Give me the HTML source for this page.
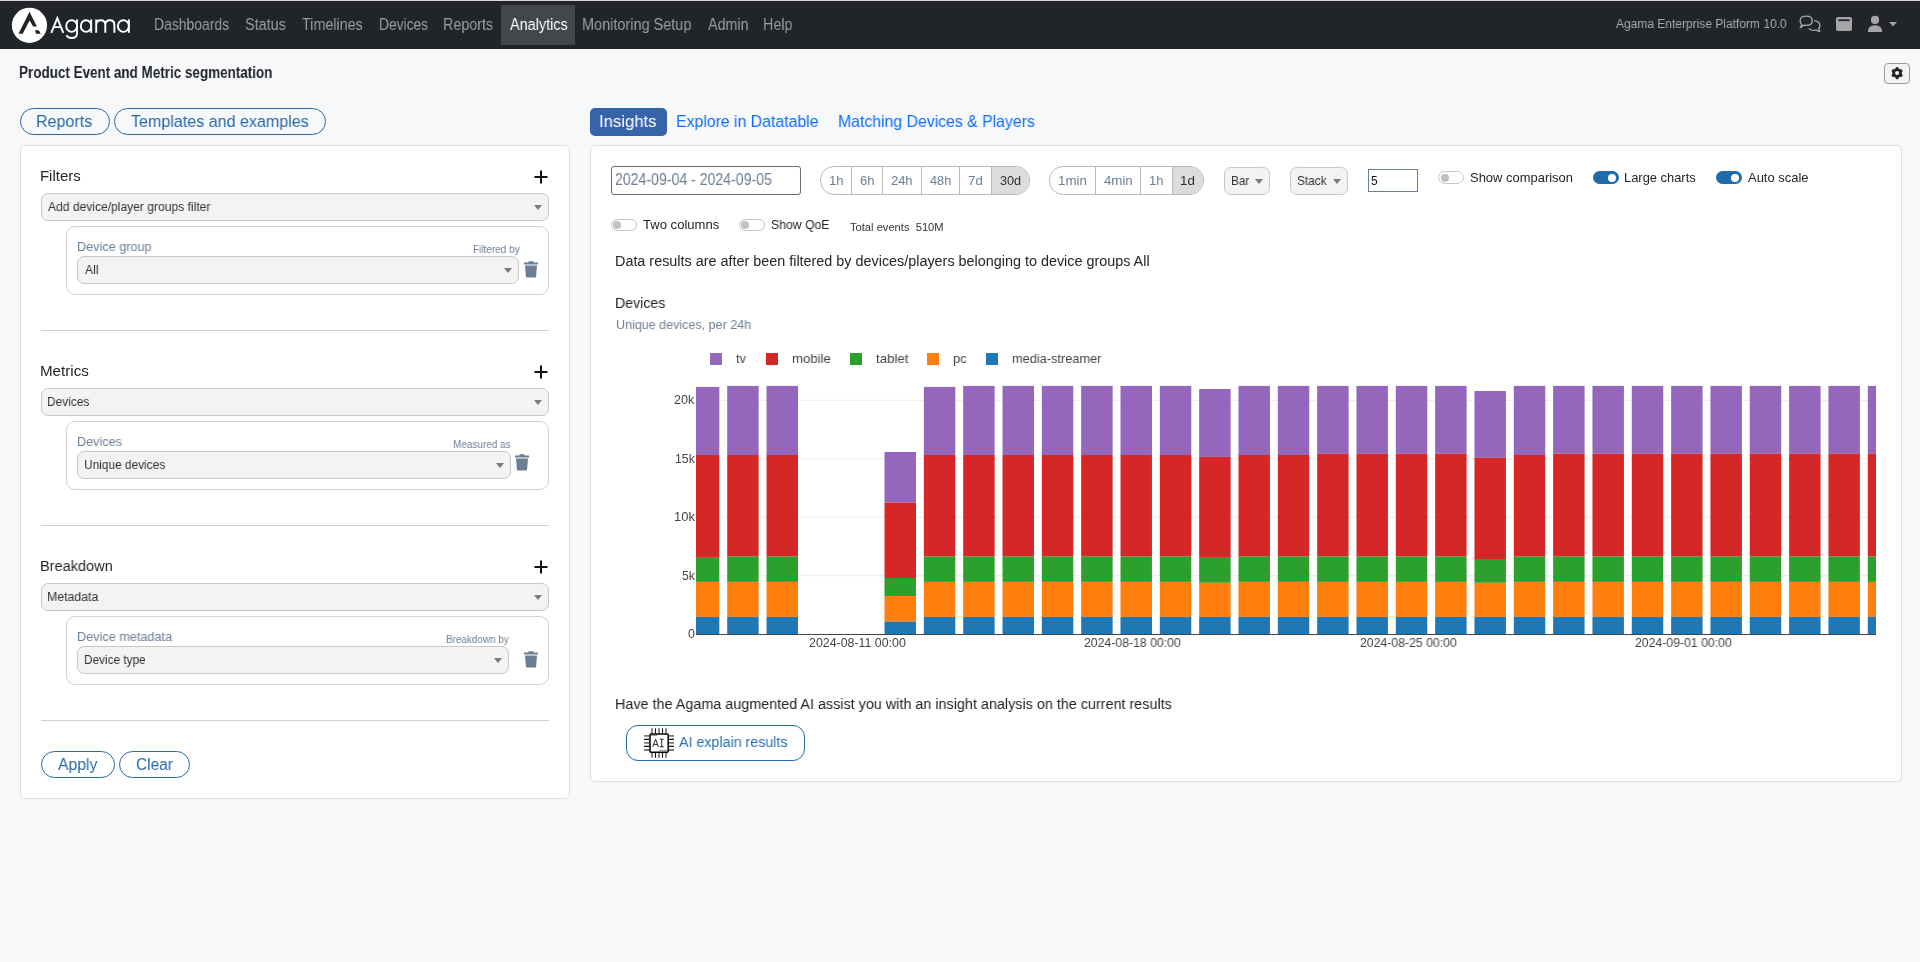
<!DOCTYPE html>
<html><head><meta charset="utf-8"><title>Agama Analytics</title>
<style>
html,body{margin:0;padding:0;width:1920px;height:962px;overflow:hidden;background:#f7f8fa;font-family:"Liberation Sans",sans-serif;position:relative}
</style></head><body>
<div style="position:absolute;left:0px;top:0px;width:1920px;height:1px;background:#dcd4cf"></div>
<div style="position:absolute;left:0px;top:1px;width:1920px;height:48px;background:#212529"></div>
<div style="position:absolute;left:501px;top:5px;width:74px;height:40px;background:#43474b"></div>
<div style="position:absolute;left:20px;top:108px;width:90px;height:27px;box-sizing:border-box;border:1px solid #2468a8;border-radius:14px"></div>
<div style="position:absolute;left:114px;top:108px;width:212px;height:27px;box-sizing:border-box;border:1px solid #2468a8;border-radius:14px"></div>
<div style="position:absolute;left:590px;top:108px;width:77px;height:28px;background:#3763a9;border-radius:5px"></div>
<div style="position:absolute;left:20px;top:145px;width:550px;height:654px;box-sizing:border-box;background:#fff;border:1px solid #dcdee0;border-radius:5px"></div>
<div style="position:absolute;left:590px;top:145px;width:1312px;height:637px;box-sizing:border-box;background:#fff;border:1px solid #dcdee0;border-radius:5px"></div>
<svg style="position:absolute;left:534px;top:169.5px" width="14" height="14" viewBox="0 0 14 14"><path d="M7 0.5V13.5M0.5 7H13.5" stroke="#111" stroke-width="2"/></svg>
<div style="position:absolute;left:41px;top:193px;width:508px;height:28px;box-sizing:border-box;background:#f3f3f3;border:1px solid #c8c8c8;border-radius:7px"></div>
<svg style="position:absolute;left:534px;top:205px" width="8" height="5" viewBox="0 0 8 5"><path d="M0 0H8L4.0 5Z" fill="#7a7a7a"/></svg>
<div style="position:absolute;left:66px;top:226px;width:483px;height:69px;box-sizing:border-box;border:1px solid #d2d2d2;border-radius:9px"></div>
<div style="position:absolute;left:77px;top:256px;width:442px;height:28px;box-sizing:border-box;background:#f3f3f3;border:1px solid #c8c8c8;border-radius:7px"></div>
<svg style="position:absolute;left:504px;top:268px" width="8" height="5" viewBox="0 0 8 5"><path d="M0 0H8L4.0 5Z" fill="#7a7a7a"/></svg>
<svg style="position:absolute;left:524px;top:261px" width="14" height="17" viewBox="0 0 14 17"><path d="M0 1.6H14V3.4H0Z M4.8 0.2H9.2L9.8 1.6H4.2Z M1 4.6H13L12.1 15.6Q12 16.6 11 16.6H3Q2 16.6 1.9 15.6Z" fill="#6c7e92"/></svg>
<div style="position:absolute;left:41px;top:330px;width:508px;height:1px;background:#c9d0d8"></div>
<svg style="position:absolute;left:534px;top:364.5px" width="14" height="14" viewBox="0 0 14 14"><path d="M7 0.5V13.5M0.5 7H13.5" stroke="#111" stroke-width="2"/></svg>
<div style="position:absolute;left:41px;top:388px;width:508px;height:28px;box-sizing:border-box;background:#f3f3f3;border:1px solid #c8c8c8;border-radius:7px"></div>
<svg style="position:absolute;left:534px;top:400px" width="8" height="5" viewBox="0 0 8 5"><path d="M0 0H8L4.0 5Z" fill="#7a7a7a"/></svg>
<div style="position:absolute;left:66px;top:421px;width:483px;height:69px;box-sizing:border-box;border:1px solid #d2d2d2;border-radius:9px"></div>
<div style="position:absolute;left:77px;top:451px;width:434px;height:28px;box-sizing:border-box;background:#f3f3f3;border:1px solid #c8c8c8;border-radius:7px"></div>
<svg style="position:absolute;left:496px;top:463px" width="8" height="5" viewBox="0 0 8 5"><path d="M0 0H8L4.0 5Z" fill="#7a7a7a"/></svg>
<svg style="position:absolute;left:515.4px;top:454.2px" width="14" height="17" viewBox="0 0 14 17"><path d="M0 1.6H14V3.4H0Z M4.8 0.2H9.2L9.8 1.6H4.2Z M1 4.6H13L12.1 15.6Q12 16.6 11 16.6H3Q2 16.6 1.9 15.6Z" fill="#6c7e92"/></svg>
<div style="position:absolute;left:41px;top:525px;width:508px;height:1px;background:#c9d0d8"></div>
<svg style="position:absolute;left:534px;top:559.5px" width="14" height="14" viewBox="0 0 14 14"><path d="M7 0.5V13.5M0.5 7H13.5" stroke="#111" stroke-width="2"/></svg>
<div style="position:absolute;left:41px;top:583px;width:508px;height:28px;box-sizing:border-box;background:#f3f3f3;border:1px solid #c8c8c8;border-radius:7px"></div>
<svg style="position:absolute;left:534px;top:595px" width="8" height="5" viewBox="0 0 8 5"><path d="M0 0H8L4.0 5Z" fill="#7a7a7a"/></svg>
<div style="position:absolute;left:66px;top:616px;width:483px;height:69px;box-sizing:border-box;border:1px solid #d2d2d2;border-radius:9px"></div>
<div style="position:absolute;left:77px;top:646px;width:432px;height:28px;box-sizing:border-box;background:#f3f3f3;border:1px solid #c8c8c8;border-radius:7px"></div>
<svg style="position:absolute;left:494px;top:658px" width="8" height="5" viewBox="0 0 8 5"><path d="M0 0H8L4.0 5Z" fill="#7a7a7a"/></svg>
<svg style="position:absolute;left:524px;top:651px" width="14" height="17" viewBox="0 0 14 17"><path d="M0 1.6H14V3.4H0Z M4.8 0.2H9.2L9.8 1.6H4.2Z M1 4.6H13L12.1 15.6Q12 16.6 11 16.6H3Q2 16.6 1.9 15.6Z" fill="#6c7e92"/></svg>
<div style="position:absolute;left:41px;top:720px;width:508px;height:1px;background:#c9d0d8"></div>
<div style="position:absolute;left:41px;top:751px;width:74px;height:27px;box-sizing:border-box;border:1px solid #2468a8;border-radius:14px"></div>
<div style="position:absolute;left:119px;top:751px;width:71px;height:27px;box-sizing:border-box;border:1px solid #2468a8;border-radius:14px"></div>
<div style="position:absolute;left:611px;top:166px;width:190px;height:29px;box-sizing:border-box;border:1px solid #6b6b6b;border-radius:3px"></div>
<div style="position:absolute;left:820px;top:166px;width:210px;height:29px;box-sizing:border-box;border:1px solid #b8b8b8;border-radius:14px;overflow:hidden;background:#fff"><div style="position:absolute;left:170.39999999999998px;top:0;right:0;bottom:0;background:#dcdcdc"></div><div style="position:absolute;left:30.100000000000023px;top:0;width:1px;bottom:0;background:#b8b8b8"></div><div style="position:absolute;left:61.0px;top:0;width:1px;bottom:0;background:#b8b8b8"></div><div style="position:absolute;left:99.89999999999998px;top:0;width:1px;bottom:0;background:#b8b8b8"></div><div style="position:absolute;left:137.79999999999995px;top:0;width:1px;bottom:0;background:#b8b8b8"></div><div style="position:absolute;left:169.89999999999998px;top:0;width:1px;bottom:0;background:#b8b8b8"></div></div>
<div style="position:absolute;left:1049px;top:166px;width:155px;height:29px;box-sizing:border-box;border:1px solid #b8b8b8;border-radius:14px;overflow:hidden;background:#fff"><div style="position:absolute;left:122.5px;top:0;right:0;bottom:0;background:#dcdcdc"></div><div style="position:absolute;left:44.90000000000009px;top:0;width:1px;bottom:0;background:#b8b8b8"></div><div style="position:absolute;left:90.0px;top:0;width:1px;bottom:0;background:#b8b8b8"></div><div style="position:absolute;left:122.0px;top:0;width:1px;bottom:0;background:#b8b8b8"></div></div>
<div style="position:absolute;left:1224px;top:167px;width:46px;height:28px;box-sizing:border-box;background:#f3f3f3;border:1px solid #c8c8c8;border-radius:7px"></div>
<svg style="position:absolute;left:1255px;top:179px" width="8" height="5" viewBox="0 0 8 5"><path d="M0 0H8L4.0 5Z" fill="#7a7a7a"/></svg>
<div style="position:absolute;left:1290px;top:167px;width:58px;height:28px;box-sizing:border-box;background:#f3f3f3;border:1px solid #c8c8c8;border-radius:7px"></div>
<svg style="position:absolute;left:1333px;top:179px" width="8" height="5" viewBox="0 0 8 5"><path d="M0 0H8L4.0 5Z" fill="#7a7a7a"/></svg>
<div style="position:absolute;left:1368px;top:169px;width:50px;height:23px;box-sizing:border-box;border:1px solid #6a7f95"></div>
<div style="position:absolute;left:1438px;top:171px;width:26px;height:13px;box-sizing:border-box;border-radius:7px;border:1px solid #c6c6c6;background:#fff"></div><div style="position:absolute;left:1440.5px;top:173.5px;width:8px;height:8px;border-radius:50%;background:#c0c0c0"></div>
<div style="position:absolute;left:1593px;top:171px;width:26px;height:13px;border-radius:7px;background:#1f6ca9"></div><div style="position:absolute;left:1608px;top:173.5px;width:8px;height:8px;border-radius:50%;background:#fff"></div>
<div style="position:absolute;left:1716px;top:171px;width:26px;height:13px;border-radius:7px;background:#1f6ca9"></div><div style="position:absolute;left:1731px;top:173.5px;width:8px;height:8px;border-radius:50%;background:#fff"></div>
<div style="position:absolute;left:611px;top:219px;width:26px;height:12px;box-sizing:border-box;border-radius:7px;border:1px solid #c6c6c6;background:#fff"></div><div style="position:absolute;left:613.0px;top:221.0px;width:8px;height:8px;border-radius:50%;background:#c0c0c0"></div>
<div style="position:absolute;left:739px;top:219px;width:26px;height:12px;box-sizing:border-box;border-radius:7px;border:1px solid #c6c6c6;background:#fff"></div><div style="position:absolute;left:741.0px;top:221.0px;width:8px;height:8px;border-radius:50%;background:#c0c0c0"></div>
<div style="position:absolute;left:626px;top:725px;width:179px;height:36px;box-sizing:border-box;border:1px solid #2468a8;border-radius:12px"></div>
<div style="position:absolute;left:710px;top:352.5px;width:12px;height:12px;background:#9467bd"></div>
<div style="position:absolute;left:766px;top:352.5px;width:12px;height:12px;background:#d62728"></div>
<div style="position:absolute;left:850px;top:352.5px;width:12px;height:12px;background:#2ca02c"></div>
<div style="position:absolute;left:927.4px;top:352.5px;width:12px;height:12px;background:#ff7f0e"></div>
<div style="position:absolute;left:986px;top:352.5px;width:12px;height:12px;background:#1f77b4"></div>
<svg style="position:absolute;left:0;top:0" width="1920" height="962" viewBox="0 0 1920 962"><rect x="696" y="399.8" width="1180" height="1" fill="#ebebeb"/><rect x="696" y="458.25" width="1180" height="1" fill="#ebebeb"/><rect x="696" y="516.7" width="1180" height="1" fill="#ebebeb"/><rect x="696" y="575.1" width="1180" height="1" fill="#ebebeb"/><rect x="696.00" y="386.9" width="23.33" height="68.10" fill="#9467bd"/><rect x="696.00" y="455" width="23.33" height="102.80" fill="#d62728"/><rect x="696.00" y="557.8" width="23.33" height="24.10" fill="#2ca02c"/><rect x="696.00" y="581.9" width="23.33" height="35.00" fill="#ff7f0e"/><rect x="696.00" y="616.9" width="23.33" height="17.10" fill="#1f77b4"/><rect x="727.20" y="385.9" width="31.46" height="69.10" fill="#9467bd"/><rect x="727.20" y="455" width="31.46" height="101.60" fill="#d62728"/><rect x="727.20" y="556.6" width="31.46" height="25.30" fill="#2ca02c"/><rect x="727.20" y="581.9" width="31.46" height="35.00" fill="#ff7f0e"/><rect x="727.20" y="616.9" width="31.46" height="17.10" fill="#1f77b4"/><rect x="766.53" y="385.9" width="31.46" height="69.10" fill="#9467bd"/><rect x="766.53" y="455" width="31.46" height="101.60" fill="#d62728"/><rect x="766.53" y="556.6" width="31.46" height="25.30" fill="#2ca02c"/><rect x="766.53" y="581.9" width="31.46" height="35.00" fill="#ff7f0e"/><rect x="766.53" y="616.9" width="31.46" height="17.10" fill="#1f77b4"/><rect x="884.52" y="452" width="31.46" height="50.60" fill="#9467bd"/><rect x="884.52" y="502.6" width="31.46" height="75.40" fill="#d62728"/><rect x="884.52" y="578" width="31.46" height="18.10" fill="#2ca02c"/><rect x="884.52" y="596.1" width="31.46" height="25.60" fill="#ff7f0e"/><rect x="884.52" y="621.7" width="31.46" height="12.30" fill="#1f77b4"/><rect x="923.85" y="386.9" width="31.46" height="68.10" fill="#9467bd"/><rect x="923.85" y="455" width="31.46" height="101.60" fill="#d62728"/><rect x="923.85" y="556.6" width="31.46" height="25.30" fill="#2ca02c"/><rect x="923.85" y="581.9" width="31.46" height="35.00" fill="#ff7f0e"/><rect x="923.85" y="616.9" width="31.46" height="17.10" fill="#1f77b4"/><rect x="963.18" y="385.9" width="31.46" height="69.10" fill="#9467bd"/><rect x="963.18" y="455" width="31.46" height="101.60" fill="#d62728"/><rect x="963.18" y="556.6" width="31.46" height="25.30" fill="#2ca02c"/><rect x="963.18" y="581.9" width="31.46" height="35.00" fill="#ff7f0e"/><rect x="963.18" y="616.9" width="31.46" height="17.10" fill="#1f77b4"/><rect x="1002.51" y="385.9" width="31.46" height="69.10" fill="#9467bd"/><rect x="1002.51" y="455" width="31.46" height="101.60" fill="#d62728"/><rect x="1002.51" y="556.6" width="31.46" height="25.30" fill="#2ca02c"/><rect x="1002.51" y="581.9" width="31.46" height="35.00" fill="#ff7f0e"/><rect x="1002.51" y="616.9" width="31.46" height="17.10" fill="#1f77b4"/><rect x="1041.84" y="385.9" width="31.46" height="69.10" fill="#9467bd"/><rect x="1041.84" y="455" width="31.46" height="101.60" fill="#d62728"/><rect x="1041.84" y="556.6" width="31.46" height="25.30" fill="#2ca02c"/><rect x="1041.84" y="581.9" width="31.46" height="35.00" fill="#ff7f0e"/><rect x="1041.84" y="616.9" width="31.46" height="17.10" fill="#1f77b4"/><rect x="1081.17" y="385.9" width="31.46" height="69.10" fill="#9467bd"/><rect x="1081.17" y="455" width="31.46" height="101.60" fill="#d62728"/><rect x="1081.17" y="556.6" width="31.46" height="25.30" fill="#2ca02c"/><rect x="1081.17" y="581.9" width="31.46" height="35.00" fill="#ff7f0e"/><rect x="1081.17" y="616.9" width="31.46" height="17.10" fill="#1f77b4"/><rect x="1120.50" y="385.9" width="31.46" height="69.10" fill="#9467bd"/><rect x="1120.50" y="455" width="31.46" height="101.60" fill="#d62728"/><rect x="1120.50" y="556.6" width="31.46" height="25.30" fill="#2ca02c"/><rect x="1120.50" y="581.9" width="31.46" height="35.00" fill="#ff7f0e"/><rect x="1120.50" y="616.9" width="31.46" height="17.10" fill="#1f77b4"/><rect x="1159.83" y="385.9" width="31.46" height="69.10" fill="#9467bd"/><rect x="1159.83" y="455" width="31.46" height="101.60" fill="#d62728"/><rect x="1159.83" y="556.6" width="31.46" height="25.30" fill="#2ca02c"/><rect x="1159.83" y="581.9" width="31.46" height="35.00" fill="#ff7f0e"/><rect x="1159.83" y="616.9" width="31.46" height="17.10" fill="#1f77b4"/><rect x="1199.16" y="389" width="31.46" height="67.90" fill="#9467bd"/><rect x="1199.16" y="456.9" width="31.46" height="100.90" fill="#d62728"/><rect x="1199.16" y="557.8" width="31.46" height="25.00" fill="#2ca02c"/><rect x="1199.16" y="582.8" width="31.46" height="34.10" fill="#ff7f0e"/><rect x="1199.16" y="616.9" width="31.46" height="17.10" fill="#1f77b4"/><rect x="1238.49" y="385.9" width="31.46" height="69.10" fill="#9467bd"/><rect x="1238.49" y="455" width="31.46" height="101.60" fill="#d62728"/><rect x="1238.49" y="556.6" width="31.46" height="25.30" fill="#2ca02c"/><rect x="1238.49" y="581.9" width="31.46" height="35.00" fill="#ff7f0e"/><rect x="1238.49" y="616.9" width="31.46" height="17.10" fill="#1f77b4"/><rect x="1277.82" y="385.9" width="31.46" height="69.10" fill="#9467bd"/><rect x="1277.82" y="455" width="31.46" height="101.60" fill="#d62728"/><rect x="1277.82" y="556.6" width="31.46" height="25.30" fill="#2ca02c"/><rect x="1277.82" y="581.9" width="31.46" height="35.00" fill="#ff7f0e"/><rect x="1277.82" y="616.9" width="31.46" height="17.10" fill="#1f77b4"/><rect x="1317.15" y="385.9" width="31.46" height="67.85" fill="#9467bd"/><rect x="1317.15" y="453.75" width="31.46" height="102.85" fill="#d62728"/><rect x="1317.15" y="556.6" width="31.46" height="25.30" fill="#2ca02c"/><rect x="1317.15" y="581.9" width="31.46" height="35.00" fill="#ff7f0e"/><rect x="1317.15" y="616.9" width="31.46" height="17.10" fill="#1f77b4"/><rect x="1356.48" y="385.9" width="31.46" height="67.85" fill="#9467bd"/><rect x="1356.48" y="453.75" width="31.46" height="102.85" fill="#d62728"/><rect x="1356.48" y="556.6" width="31.46" height="25.30" fill="#2ca02c"/><rect x="1356.48" y="581.9" width="31.46" height="35.00" fill="#ff7f0e"/><rect x="1356.48" y="616.9" width="31.46" height="17.10" fill="#1f77b4"/><rect x="1395.81" y="385.9" width="31.46" height="67.85" fill="#9467bd"/><rect x="1395.81" y="453.75" width="31.46" height="102.85" fill="#d62728"/><rect x="1395.81" y="556.6" width="31.46" height="25.30" fill="#2ca02c"/><rect x="1395.81" y="581.9" width="31.46" height="35.00" fill="#ff7f0e"/><rect x="1395.81" y="616.9" width="31.46" height="17.10" fill="#1f77b4"/><rect x="1435.14" y="385.9" width="31.46" height="67.85" fill="#9467bd"/><rect x="1435.14" y="453.75" width="31.46" height="102.85" fill="#d62728"/><rect x="1435.14" y="556.6" width="31.46" height="25.30" fill="#2ca02c"/><rect x="1435.14" y="581.9" width="31.46" height="35.00" fill="#ff7f0e"/><rect x="1435.14" y="616.9" width="31.46" height="17.10" fill="#1f77b4"/><rect x="1474.47" y="391" width="31.46" height="66.80" fill="#9467bd"/><rect x="1474.47" y="457.8" width="31.46" height="101.20" fill="#d62728"/><rect x="1474.47" y="559" width="31.46" height="23.80" fill="#2ca02c"/><rect x="1474.47" y="582.8" width="31.46" height="34.10" fill="#ff7f0e"/><rect x="1474.47" y="616.9" width="31.46" height="17.10" fill="#1f77b4"/><rect x="1513.80" y="385.9" width="31.46" height="69.10" fill="#9467bd"/><rect x="1513.80" y="455" width="31.46" height="101.60" fill="#d62728"/><rect x="1513.80" y="556.6" width="31.46" height="25.30" fill="#2ca02c"/><rect x="1513.80" y="581.9" width="31.46" height="35.00" fill="#ff7f0e"/><rect x="1513.80" y="616.9" width="31.46" height="17.10" fill="#1f77b4"/><rect x="1553.13" y="385.9" width="31.46" height="67.85" fill="#9467bd"/><rect x="1553.13" y="453.75" width="31.46" height="102.85" fill="#d62728"/><rect x="1553.13" y="556.6" width="31.46" height="25.30" fill="#2ca02c"/><rect x="1553.13" y="581.9" width="31.46" height="35.00" fill="#ff7f0e"/><rect x="1553.13" y="616.9" width="31.46" height="17.10" fill="#1f77b4"/><rect x="1592.46" y="385.9" width="31.46" height="67.85" fill="#9467bd"/><rect x="1592.46" y="453.75" width="31.46" height="102.85" fill="#d62728"/><rect x="1592.46" y="556.6" width="31.46" height="25.30" fill="#2ca02c"/><rect x="1592.46" y="581.9" width="31.46" height="35.00" fill="#ff7f0e"/><rect x="1592.46" y="616.9" width="31.46" height="17.10" fill="#1f77b4"/><rect x="1631.79" y="385.9" width="31.46" height="67.85" fill="#9467bd"/><rect x="1631.79" y="453.75" width="31.46" height="102.85" fill="#d62728"/><rect x="1631.79" y="556.6" width="31.46" height="25.30" fill="#2ca02c"/><rect x="1631.79" y="581.9" width="31.46" height="35.00" fill="#ff7f0e"/><rect x="1631.79" y="616.9" width="31.46" height="17.10" fill="#1f77b4"/><rect x="1671.12" y="385.9" width="31.46" height="67.85" fill="#9467bd"/><rect x="1671.12" y="453.75" width="31.46" height="102.85" fill="#d62728"/><rect x="1671.12" y="556.6" width="31.46" height="25.30" fill="#2ca02c"/><rect x="1671.12" y="581.9" width="31.46" height="35.00" fill="#ff7f0e"/><rect x="1671.12" y="616.9" width="31.46" height="17.10" fill="#1f77b4"/><rect x="1710.45" y="385.9" width="31.46" height="67.85" fill="#9467bd"/><rect x="1710.45" y="453.75" width="31.46" height="102.85" fill="#d62728"/><rect x="1710.45" y="556.6" width="31.46" height="25.30" fill="#2ca02c"/><rect x="1710.45" y="581.9" width="31.46" height="35.00" fill="#ff7f0e"/><rect x="1710.45" y="616.9" width="31.46" height="17.10" fill="#1f77b4"/><rect x="1749.78" y="385.9" width="31.46" height="67.85" fill="#9467bd"/><rect x="1749.78" y="453.75" width="31.46" height="102.85" fill="#d62728"/><rect x="1749.78" y="556.6" width="31.46" height="25.30" fill="#2ca02c"/><rect x="1749.78" y="581.9" width="31.46" height="35.00" fill="#ff7f0e"/><rect x="1749.78" y="616.9" width="31.46" height="17.10" fill="#1f77b4"/><rect x="1789.11" y="385.9" width="31.46" height="67.85" fill="#9467bd"/><rect x="1789.11" y="453.75" width="31.46" height="102.85" fill="#d62728"/><rect x="1789.11" y="556.6" width="31.46" height="25.30" fill="#2ca02c"/><rect x="1789.11" y="581.9" width="31.46" height="35.00" fill="#ff7f0e"/><rect x="1789.11" y="616.9" width="31.46" height="17.10" fill="#1f77b4"/><rect x="1828.44" y="385.9" width="31.46" height="67.85" fill="#9467bd"/><rect x="1828.44" y="453.75" width="31.46" height="102.85" fill="#d62728"/><rect x="1828.44" y="556.6" width="31.46" height="25.30" fill="#2ca02c"/><rect x="1828.44" y="581.9" width="31.46" height="35.00" fill="#ff7f0e"/><rect x="1828.44" y="616.9" width="31.46" height="17.10" fill="#1f77b4"/><rect x="1867.77" y="385.9" width="8.23" height="67.85" fill="#9467bd"/><rect x="1867.77" y="453.75" width="8.23" height="102.85" fill="#d62728"/><rect x="1867.77" y="556.6" width="8.23" height="25.30" fill="#2ca02c"/><rect x="1867.77" y="581.9" width="8.23" height="35.00" fill="#ff7f0e"/><rect x="1867.77" y="616.9" width="8.23" height="17.10" fill="#1f77b4"/><rect x="696" y="634" width="1180" height="1" fill="#444"/></svg>
<svg style="position:absolute;left:0;top:0" width="60" height="50" viewBox="0 0 60 50"><circle cx="29.45" cy="25.35" r="17.6" fill="#fff"/><path d="M29.5 11.8L18.5 33.8H22.7L29.6 20.4L33.1 26.6H36.9Z M35 30.2H38.75L40.8 33.8H36Z" fill="#212529"/></svg>
<svg style="position:absolute;left:0;top:0" width="140" height="48" viewBox="0 0 140 48" fill="none" stroke="#fff" stroke-width="1.9"><path d="M51.3 32.8L57.3 18.1L63.3 32.8M53.4 27.1H61.2"/><ellipse cx="71.6" cy="26.05" rx="5.4" ry="5.8"/><path d="M77 19.4V33.2Q77 38 71.6 38Q68 38 66.4 35.2"/><ellipse cx="86" cy="26.05" rx="5.2" ry="5.8"/><path d="M91.2 19.4V32.8"/><path d="M96.2 32.8V19.4M96.2 24.8Q96.2 20.25 100.75 20.25Q105.3 20.25 105.3 24.8V32.8M105.3 24.8Q105.3 20.25 109.85 20.25Q114.4 20.25 114.4 24.8V32.8"/><ellipse cx="123.4" cy="26.05" rx="5.5" ry="5.8"/><path d="M128.9 19.4V32.8"/></svg>
<div style="position:absolute;left:1884px;top:63px;width:26px;height:21px;box-sizing:border-box;background:#f3f3f3;border:1px solid #9a9a9a;border-radius:4px"></div>
<svg style="position:absolute;left:1887px;top:63px" width="20" height="20" viewBox="-10 -10 20 20"><g transform="translate(0.1 0.1)"><path d="M-2 -3.5L-1.3 -5.6Q0 -6.6 1.3 -5.6L2 -3.5V3.5L1.3 5.6Q0 6.6 -1.3 5.6L-2 3.5Z" transform="rotate(0)" fill="#212529"/><path d="M-2 -3.5L-1.3 -5.6Q0 -6.6 1.3 -5.6L2 -3.5V3.5L1.3 5.6Q0 6.6 -1.3 5.6L-2 3.5Z" transform="rotate(60)" fill="#212529"/><path d="M-2 -3.5L-1.3 -5.6Q0 -6.6 1.3 -5.6L2 -3.5V3.5L1.3 5.6Q0 6.6 -1.3 5.6L-2 3.5Z" transform="rotate(120)" fill="#212529"/><circle r="4.7" fill="#212529"/><circle r="2.0" fill="#f3f3f3"/></g></svg>
<svg style="position:absolute;left:1798px;top:14px" width="24" height="20" viewBox="0 0 24 20" fill="none" stroke="#a8a8a8" stroke-width="1.3" stroke-linejoin="round"><path d="M3.8 10.6Q2.1 9.1 2.1 6.8Q2.1 2.2 8.2 2.2Q14.3 2.2 14.3 6.8Q14.3 11.4 8.2 11.4Q7 11.4 5.8 11.1L2.2 13.6Z"/><path d="M16.2 6.6Q21.9 7.4 21.9 11.5Q21.9 13.4 20.6 14.8L21.8 17.6L18.3 16.1Q17.3 16.4 16.1 16.4Q12.4 16.4 10.7 14.3"/></svg>
<svg style="position:absolute;left:1836px;top:17px" width="16" height="14" viewBox="0 0 16 14"><rect x="0" y="0" width="16" height="14" rx="2" fill="#a5a5a5"/><rect x="2.3" y="2.3" width="11.4" height="1.8" fill="#212529"/></svg>
<svg style="position:absolute;left:1867px;top:15px" width="16" height="18" viewBox="0 0 16 18"><circle cx="8" cy="4.9" r="4.1" fill="#a5a5a5"/><path d="M0.8 17.1Q0.8 10.2 8 10.2Q15.2 10.2 15.2 17.1Z" fill="#a5a5a5"/></svg>
<svg style="position:absolute;left:1889px;top:21.75px" width="8" height="4.3" viewBox="0 0 8 4.3"><path d="M0 0H8L4.0 4.3Z" fill="#a5a5a5"/></svg>
<svg style="position:absolute;left:638px;top:724px" width="42" height="38" viewBox="0 0 42 38"><path d="M14 4.2V9.4M14 28.5V33.8" stroke="#7a7a7a" stroke-width="1.8"/><path d="M17.5 4.2V9.4M17.5 28.5V33.8" stroke="#111" stroke-width="1.1"/><path d="M21 4.2V9.4M21 28.5V33.8" stroke="#7a7a7a" stroke-width="1.8"/><path d="M24.5 4.2V9.4M24.5 28.5V33.8" stroke="#111" stroke-width="1.1"/><path d="M28 4.2V9.4M28 28.5V33.8" stroke="#7a7a7a" stroke-width="1.8"/><path d="M6.1 11.899999999999977H11.5M30.6 11.899999999999977H36" stroke="#7a7a7a" stroke-width="1.8"/><path d="M6.1 15.399999999999977H11.5M30.6 15.399999999999977H36" stroke="#111" stroke-width="1.1"/><path d="M6.1 18.899999999999977H11.5M30.6 18.899999999999977H36" stroke="#7a7a7a" stroke-width="1.8"/><path d="M6.1 22.399999999999977H11.5M30.6 22.399999999999977H36" stroke="#111" stroke-width="1.1"/><path d="M6.1 26H11.5M30.6 26H36" stroke="#7a7a7a" stroke-width="1.8"/><rect x="12" y="9.9" width="18.2" height="18.3" rx="1" fill="#fff" stroke="#000" stroke-width="1.5"/><path d="M14.7 23L17.6 15.2L20.4 23M15.7 20.4H19.5M21.8 15.2H25.6M23.7 15.2V22.8M21.8 22.8H25.6" fill="none" stroke="#111" stroke-width="0.9"/><path d="M13.5 11.5H19.5M21.5 26.4H29" stroke="#222" stroke-width="0.8" stroke-dasharray="1.2 0.8"/></svg>
<div style="position:absolute;left:153.51px;top:16.01px;font-size:17.21px;line-height:17.21px;color:#9c9d9f;font-weight:400;white-space:nowrap;transform-origin:0 0;transform:scaleX(0.8107);will-change:transform;">Dashboards</div>
<div style="position:absolute;left:244.95px;top:16.01px;font-size:17.21px;line-height:17.21px;color:#9c9d9f;font-weight:400;white-space:nowrap;transform-origin:0 0;transform:scaleX(0.8384);will-change:transform;">Status</div>
<div style="position:absolute;left:301.78px;top:16.01px;font-size:17.21px;line-height:17.21px;color:#9c9d9f;font-weight:400;white-space:nowrap;transform-origin:0 0;transform:scaleX(0.8339);will-change:transform;">Timelines</div>
<div style="position:absolute;left:378.62px;top:16.01px;font-size:17.21px;line-height:17.21px;color:#9c9d9f;font-weight:400;white-space:nowrap;transform-origin:0 0;transform:scaleX(0.8024);will-change:transform;">Devices</div>
<div style="position:absolute;left:443.18px;top:16.01px;font-size:17.21px;line-height:17.21px;color:#9c9d9f;font-weight:400;white-space:nowrap;transform-origin:0 0;transform:scaleX(0.8343);will-change:transform;">Reports</div>
<div style="position:absolute;left:509.50px;top:16.01px;font-size:17.21px;line-height:17.21px;color:#ffffff;font-weight:400;white-space:nowrap;transform-origin:0 0;transform:scaleX(0.8401);will-change:transform;">Analytics</div>
<div style="position:absolute;left:582.37px;top:16.01px;font-size:17.21px;line-height:17.21px;color:#9c9d9f;font-weight:400;white-space:nowrap;transform-origin:0 0;transform:scaleX(0.8418);will-change:transform;">Monitoring Setup</div>
<div style="position:absolute;left:708.00px;top:16.01px;font-size:17.21px;line-height:17.21px;color:#9c9d9f;font-weight:400;white-space:nowrap;transform-origin:0 0;transform:scaleX(0.8324);will-change:transform;">Admin</div>
<div style="position:absolute;left:763.38px;top:16.01px;font-size:17.21px;line-height:17.21px;color:#9c9d9f;font-weight:400;white-space:nowrap;transform-origin:0 0;transform:scaleX(0.8336);will-change:transform;">Help</div>
<div style="position:absolute;left:1616.30px;top:17.01px;font-size:13.08px;line-height:13.08px;color:#a9aaac;font-weight:400;white-space:nowrap;transform-origin:0 0;transform:scaleX(0.9169);will-change:transform;">Agama Enterprise Platform 10.0</div>
<div style="position:absolute;left:19.36px;top:64.01px;font-size:17.21px;line-height:17.21px;color:#212529;font-weight:700;white-space:nowrap;transform-origin:0 0;transform:scaleX(0.7826);will-change:transform;">Product Event and Metric segmentation</div>
<div style="position:absolute;left:36.24px;top:113.00px;font-size:17.07px;line-height:17.07px;color:#2468a8;font-weight:400;white-space:nowrap;transform-origin:0 0;transform:scaleX(0.9414);will-change:transform;">Reports</div>
<div style="position:absolute;left:131.05px;top:113.00px;font-size:17.07px;line-height:17.07px;color:#2468a8;font-weight:400;white-space:nowrap;transform-origin:0 0;transform:scaleX(0.9416);will-change:transform;">Templates and examples</div>
<div style="position:absolute;left:599.30px;top:113.01px;font-size:17.35px;line-height:17.35px;color:#ffffff;font-weight:400;white-space:nowrap;transform-origin:0 0;transform:scaleX(0.9620);will-change:transform;">Insights</div>
<div style="position:absolute;left:676.26px;top:113.01px;font-size:17.07px;line-height:17.07px;color:#0d6efd;font-weight:400;white-space:nowrap;transform-origin:0 0;transform:scaleX(0.9270);will-change:transform;">Explore in Datatable</div>
<div style="position:absolute;left:837.97px;top:113.00px;font-size:16.50px;line-height:16.50px;color:#0d6efd;font-weight:400;white-space:nowrap;transform-origin:0 0;transform:scaleX(0.9579);will-change:transform;">Matching Devices &amp; Players</div>
<div style="position:absolute;left:40.33px;top:169.01px;font-size:14.79px;line-height:14.79px;color:#212529;font-weight:400;white-space:nowrap;transform-origin:0 0;transform:scaleX(1.0092);will-change:transform;">Filters</div>
<div style="position:absolute;left:48.30px;top:200.02px;font-size:13.08px;line-height:13.08px;color:#333333;font-weight:400;white-space:nowrap;transform-origin:0 0;transform:scaleX(0.9230);will-change:transform;">Add device/player groups filter</div>
<div style="position:absolute;left:76.91px;top:241.01px;font-size:12.80px;line-height:12.80px;color:#6b8096;font-weight:400;white-space:nowrap;transform-origin:0 0;transform:scaleX(0.9892);will-change:transform;">Device group</div>
<div style="position:absolute;left:472.92px;top:244.01px;font-size:10.67px;line-height:10.67px;color:#6b8096;font-weight:400;white-space:nowrap;transform-origin:0 0;transform:scaleX(0.9374);will-change:transform;">Filtered by</div>
<div style="position:absolute;left:85.00px;top:263.01px;font-size:13.37px;line-height:13.37px;color:#333333;font-weight:400;white-space:nowrap;transform-origin:0 0;transform:scaleX(0.9015);will-change:transform;">All</div>
<div style="position:absolute;left:40.32px;top:364.01px;font-size:14.79px;line-height:14.79px;color:#212529;font-weight:400;white-space:nowrap;transform-origin:0 0;transform:scaleX(1.0252);will-change:transform;">Metrics</div>
<div style="position:absolute;left:47.37px;top:395.02px;font-size:13.08px;line-height:13.08px;color:#333333;font-weight:400;white-space:nowrap;transform-origin:0 0;transform:scaleX(0.9090);will-change:transform;">Devices</div>
<div style="position:absolute;left:76.91px;top:436.01px;font-size:12.80px;line-height:12.80px;color:#6b8096;font-weight:400;white-space:nowrap;transform-origin:0 0;transform:scaleX(0.9881);will-change:transform;">Devices</div>
<div style="position:absolute;left:452.97px;top:439.01px;font-size:10.67px;line-height:10.67px;color:#6b8096;font-weight:400;white-space:nowrap;transform-origin:0 0;transform:scaleX(0.9364);will-change:transform;">Measured as</div>
<div style="position:absolute;left:84.26px;top:458.01px;font-size:13.37px;line-height:13.37px;color:#333333;font-weight:400;white-space:nowrap;transform-origin:0 0;transform:scaleX(0.8896);will-change:transform;">Unique devices</div>
<div style="position:absolute;left:40.36px;top:559.01px;font-size:14.79px;line-height:14.79px;color:#212529;font-weight:400;white-space:nowrap;transform-origin:0 0;transform:scaleX(0.9845);will-change:transform;">Breakdown</div>
<div style="position:absolute;left:47.34px;top:590.02px;font-size:13.08px;line-height:13.08px;color:#333333;font-weight:400;white-space:nowrap;transform-origin:0 0;transform:scaleX(0.9419);will-change:transform;">Metadata</div>
<div style="position:absolute;left:76.91px;top:631.01px;font-size:12.80px;line-height:12.80px;color:#6b8096;font-weight:400;white-space:nowrap;transform-origin:0 0;transform:scaleX(0.9913);will-change:transform;">Device metadata</div>
<div style="position:absolute;left:446.23px;top:634.01px;font-size:10.67px;line-height:10.67px;color:#6b8096;font-weight:400;white-space:nowrap;transform-origin:0 0;transform:scaleX(0.9287);will-change:transform;">Breakdown by</div>
<div style="position:absolute;left:84.08px;top:653.01px;font-size:13.37px;line-height:13.37px;color:#333333;font-weight:400;white-space:nowrap;transform-origin:0 0;transform:scaleX(0.8834);will-change:transform;">Device type</div>
<div style="position:absolute;left:58.30px;top:757.01px;font-size:16.64px;line-height:16.64px;color:#2468a8;font-weight:400;white-space:nowrap;transform-origin:0 0;transform:scaleX(0.9490);will-change:transform;">Apply</div>
<div style="position:absolute;left:135.58px;top:757.01px;font-size:16.64px;line-height:16.64px;color:#2468a8;font-weight:400;white-space:nowrap;transform-origin:0 0;transform:scaleX(0.9280);will-change:transform;">Clear</div>
<div style="position:absolute;left:614.84px;top:172.01px;font-size:15.79px;line-height:15.79px;color:#6b8096;font-weight:400;white-space:nowrap;transform-origin:0 0;transform:scaleX(0.8940);will-change:transform;">2024-09-04 - 2024-09-05</div>
<div style="position:absolute;left:828.98px;top:175.01px;font-size:12.37px;line-height:12.37px;color:#6b8096;font-weight:400;white-space:nowrap;transform-origin:0 0;transform:scaleX(1.0655);will-change:transform;">1h</div>
<div style="position:absolute;left:860.29px;top:175.01px;font-size:12.37px;line-height:12.37px;color:#6b8096;font-weight:400;white-space:nowrap;transform-origin:0 0;transform:scaleX(1.0570);will-change:transform;">6h</div>
<div style="position:absolute;left:891.40px;top:175.01px;font-size:12.37px;line-height:12.37px;color:#6b8096;font-weight:400;white-space:nowrap;transform-origin:0 0;transform:scaleX(1.0429);will-change:transform;">24h</div>
<div style="position:absolute;left:930.20px;top:175.01px;font-size:12.37px;line-height:12.37px;color:#6b8096;font-weight:400;white-space:nowrap;transform-origin:0 0;transform:scaleX(1.0275);will-change:transform;">48h</div>
<div style="position:absolute;left:968.08px;top:175.01px;font-size:12.37px;line-height:12.37px;color:#6b8096;font-weight:400;white-space:nowrap;transform-origin:0 0;transform:scaleX(1.0730);will-change:transform;">7d</div>
<div style="position:absolute;left:999.80px;top:175.01px;font-size:12.37px;line-height:12.37px;color:#2d2d2d;font-weight:400;white-space:nowrap;transform-origin:0 0;transform:scaleX(1.0223);will-change:transform;">30d</div>
<div style="position:absolute;left:1057.92px;top:175.01px;font-size:12.37px;line-height:12.37px;color:#6b8096;font-weight:400;white-space:nowrap;transform-origin:0 0;transform:scaleX(1.0789);will-change:transform;">1min</div>
<div style="position:absolute;left:1104.19px;top:175.01px;font-size:12.37px;line-height:12.37px;color:#6b8096;font-weight:400;white-space:nowrap;transform-origin:0 0;transform:scaleX(1.0721);will-change:transform;">4min</div>
<div style="position:absolute;left:1149.39px;top:175.01px;font-size:12.37px;line-height:12.37px;color:#6b8096;font-weight:400;white-space:nowrap;transform-origin:0 0;transform:scaleX(1.0492);will-change:transform;">1h</div>
<div style="position:absolute;left:1180.26px;top:175.01px;font-size:12.37px;line-height:12.37px;color:#2d2d2d;font-weight:400;white-space:nowrap;transform-origin:0 0;transform:scaleX(1.0818);will-change:transform;">1d</div>
<div style="position:absolute;left:1230.68px;top:175.01px;font-size:12.37px;line-height:12.37px;color:#333333;font-weight:400;white-space:nowrap;transform-origin:0 0;transform:scaleX(0.9546);will-change:transform;">Bar</div>
<div style="position:absolute;left:1297.03px;top:175.01px;font-size:12.37px;line-height:12.37px;color:#333333;font-weight:400;white-space:nowrap;transform-origin:0 0;transform:scaleX(0.9560);will-change:transform;">Stack</div>
<div style="position:absolute;left:1371.35px;top:176.01px;font-size:11.95px;line-height:11.95px;color:#111111;font-weight:400;white-space:nowrap;transform-origin:0 0;transform:scaleX(0.9505);will-change:transform;">5</div>
<div style="position:absolute;left:1469.99px;top:172.02px;font-size:12.80px;line-height:12.80px;color:#212529;font-weight:400;white-space:nowrap;transform-origin:0 0;transform:scaleX(1.0127);will-change:transform;">Show comparison</div>
<div style="position:absolute;left:1623.99px;top:172.02px;font-size:12.80px;line-height:12.80px;color:#212529;font-weight:400;white-space:nowrap;transform-origin:0 0;transform:scaleX(1.0079);will-change:transform;">Large charts</div>
<div style="position:absolute;left:1748.00px;top:172.02px;font-size:12.80px;line-height:12.80px;color:#212529;font-weight:400;white-space:nowrap;transform-origin:0 0;transform:scaleX(1.0127);will-change:transform;">Auto scale</div>
<div style="position:absolute;left:643.00px;top:219.01px;font-size:12.66px;line-height:12.66px;color:#212529;font-weight:400;white-space:nowrap;transform-origin:0 0;transform:scaleX(1.0332);will-change:transform;">Two columns</div>
<div style="position:absolute;left:771.22px;top:219.01px;font-size:12.66px;line-height:12.66px;color:#212529;font-weight:400;white-space:nowrap;transform-origin:0 0;transform:scaleX(0.9668);will-change:transform;">Show QoE</div>
<div style="position:absolute;left:850.13px;top:223.01px;font-size:10.38px;line-height:10.38px;color:#333333;font-weight:400;white-space:nowrap;transform-origin:0 0;transform:scaleX(1.0744);will-change:transform;">Total events  510M</div>
<div style="position:absolute;left:615.48px;top:254.01px;font-size:14.08px;line-height:14.08px;color:#212529;font-weight:400;white-space:nowrap;transform-origin:0 0;transform:scaleX(1.0211);will-change:transform;">Data results are after been filtered by devices/players belonging to device groups All</div>
<div style="position:absolute;left:615.39px;top:296.01px;font-size:14.65px;line-height:14.65px;color:#212529;font-weight:400;white-space:nowrap;transform-origin:0 0;transform:scaleX(0.9664);will-change:transform;">Devices</div>
<div style="position:absolute;left:615.72px;top:319.01px;font-size:12.66px;line-height:12.66px;color:#6b8096;font-weight:400;white-space:nowrap;transform-origin:0 0;transform:scaleX(0.9896);will-change:transform;">Unique devices, per 24h</div>
<div style="position:absolute;left:615.48px;top:696.00px;font-size:15.22px;line-height:15.22px;color:#212529;font-weight:400;white-space:nowrap;transform-origin:0 0;transform:scaleX(0.9444);will-change:transform;">Have the Agama augmented AI assist you with an insight analysis on the current results</div>
<div style="position:absolute;left:679.30px;top:735.00px;font-size:14.65px;line-height:14.65px;color:#2a6fb0;font-weight:400;white-space:nowrap;transform-origin:0 0;transform:scaleX(0.9731);will-change:transform;">AI explain results</div>
<div style="position:absolute;left:735.90px;top:352.01px;font-size:13.50px;line-height:13.50px;color:#444444;font-weight:400;white-space:nowrap;transform-origin:0 0;transform:scaleX(0.9428);will-change:transform;">tv</div>
<div style="position:absolute;left:791.88px;top:352.01px;font-size:13.50px;line-height:13.50px;color:#444444;font-weight:400;white-space:nowrap;transform-origin:0 0;transform:scaleX(0.9771);will-change:transform;">mobile</div>
<div style="position:absolute;left:876.00px;top:352.01px;font-size:13.50px;line-height:13.50px;color:#444444;font-weight:400;white-space:nowrap;transform-origin:0 0;transform:scaleX(0.9827);will-change:transform;">tablet</div>
<div style="position:absolute;left:952.79px;top:352.01px;font-size:13.50px;line-height:13.50px;color:#444444;font-weight:400;white-space:nowrap;transform-origin:0 0;transform:scaleX(0.9543);will-change:transform;">pc</div>
<div style="position:absolute;left:1011.70px;top:352.01px;font-size:13.50px;line-height:13.50px;color:#444444;font-weight:400;white-space:nowrap;transform-origin:0 0;transform:scaleX(0.9464);will-change:transform;">media-streamer</div>
<div style="position:absolute;left:674.41px;top:394.01px;font-size:12.23px;line-height:12.23px;color:#444444;font-weight:400;white-space:nowrap;transform-origin:0 0;transform:scaleX(1.0239);will-change:transform;">20k</div>
<div style="position:absolute;left:674.83px;top:453.02px;font-size:12.23px;line-height:12.23px;color:#444444;font-weight:400;white-space:nowrap;transform-origin:0 0;transform:scaleX(1.0028);will-change:transform;">15k</div>
<div style="position:absolute;left:673.69px;top:511.02px;font-size:12.23px;line-height:12.23px;color:#444444;font-weight:400;white-space:nowrap;transform-origin:0 0;transform:scaleX(1.0602);will-change:transform;">10k</div>
<div style="position:absolute;left:681.62px;top:570.01px;font-size:12.23px;line-height:12.23px;color:#444444;font-weight:400;white-space:nowrap;transform-origin:0 0;transform:scaleX(1.0058);will-change:transform;">5k</div>
<div style="position:absolute;left:688.21px;top:628.01px;font-size:12.23px;line-height:12.23px;color:#444444;font-weight:400;white-space:nowrap;transform-origin:0 0;transform:scaleX(1.0138);will-change:transform;">0</div>
<div style="position:absolute;left:808.92px;top:637.01px;font-size:12.37px;line-height:12.37px;color:#444444;font-weight:400;white-space:nowrap;transform-origin:0 0;transform:scaleX(1.0012);will-change:transform;">2024-08-11 00:00</div>
<div style="position:absolute;left:1084.42px;top:637.01px;font-size:12.37px;line-height:12.37px;color:#444444;font-weight:400;white-space:nowrap;transform-origin:0 0;transform:scaleX(0.9917);will-change:transform;">2024-08-18 00:00</div>
<div style="position:absolute;left:1359.92px;top:637.01px;font-size:12.37px;line-height:12.37px;color:#444444;font-weight:400;white-space:nowrap;transform-origin:0 0;transform:scaleX(0.9917);will-change:transform;">2024-08-25 00:00</div>
<div style="position:absolute;left:1635.12px;top:637.01px;font-size:12.37px;line-height:12.37px;color:#444444;font-weight:400;white-space:nowrap;transform-origin:0 0;transform:scaleX(0.9917);will-change:transform;">2024-09-01 00:00</div>
</body></html>
